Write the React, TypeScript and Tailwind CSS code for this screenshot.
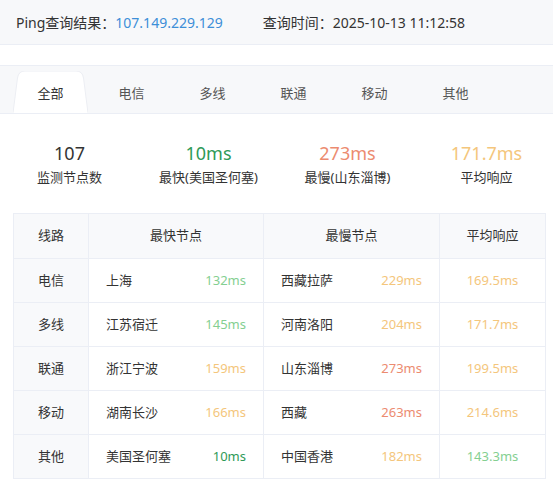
import React from "react";

const font = { fontFamily: '"Noto Sans", "Noto Sans CJK SC", sans-serif' };

type Row = {
  line: string;
  fast: string;
  fastMs: string;
  fastC: string;
  slow: string;
  slowMs: string;
  slowC: string;
  avg: string;
  avgC: string;
};

const G = "text-[#84cf91]";
const Y = "text-[#f4c67c]";
const R = "text-[#ec8b70]";
const DG = "text-[#2f9a57]";

const rows: Row[] = [
  { line: "电信", fast: "上海", fastMs: "132ms", fastC: G, slow: "西藏拉萨", slowMs: "229ms", slowC: Y, avg: "169.5ms", avgC: Y },
  { line: "多线", fast: "江苏宿迁", fastMs: "145ms", fastC: G, slow: "河南洛阳", slowMs: "204ms", slowC: Y, avg: "171.7ms", avgC: Y },
  { line: "联通", fast: "浙江宁波", fastMs: "159ms", fastC: Y, slow: "山东淄博", slowMs: "273ms", slowC: R, avg: "199.5ms", avgC: Y },
  { line: "移动", fast: "湖南长沙", fastMs: "166ms", fastC: Y, slow: "西藏", slowMs: "263ms", slowC: R, avg: "214.6ms", avgC: Y },
  { line: "其他", fast: "美国圣何塞", fastMs: "10ms", fastC: DG, slow: "中国香港", slowMs: "182ms", slowC: Y, avg: "143.3ms", avgC: G },
];

const tabs = ["全部", "电信", "多线", "联通", "移动", "其他"];

function ActiveTabShape() {
  return (
    <svg className="absolute left-[3px] top-[5px]" width="75" height="42" viewBox="0 0 75 42">
      <path d="M0 42 L4.5 7 Q5.5 0 12 0 L63 0 Q69.5 0 70.5 7 L75 42 Z" fill="#ffffff" stroke="#eceef3" strokeWidth="1" />
      <rect x="0.5" y="41" width="74" height="1" fill="#ffffff" />
    </svg>
  );
}

export default function App() {
  return (
    <div className="w-[553px] h-[483px] overflow-hidden bg-white text-[#333333]" style={font}>
      <div className="h-[45px] bg-[#f7f8fa] border-b border-[#ebeef5] flex items-center pl-[16px] text-[14px]">
        <span>Ping查询结果：</span>
        <span className="text-[#3d8fd8]">107.149.229.129</span>
        <span className="ml-[40px]">查询时间：2025-10-13 11:12:58</span>
      </div>
      <div className="h-[20px]" />
      <div className="h-[49px] bg-[#f7f8fa] border-y border-[#ebeef5] flex pl-[10px] relative">
        {tabs.map((t, i) => (
          <div key={t} className="relative w-[81px] h-full flex items-center justify-center text-[13px]">
            {i === 0 && <ActiveTabShape />}
            <span className={"relative pt-[8px] " + (i === 0 ? "text-[#333333]" : "text-[#555555]")}>{t}</span>
          </div>
        ))}
      </div>
      <div className="grid grid-cols-4 w-[556px] pt-[27px] h-[99px]">
        {[
          { v: "107", c: "text-[#333333]", l: "监测节点数" },
          { v: "10ms", c: DG, l: "最快(美国圣何塞)" },
          { v: "273ms", c: R, l: "最慢(山东淄博)" },
          { v: "171.7ms", c: Y, l: "平均响应" },
        ].map((s) => (
          <div key={s.l} className="flex flex-col items-center">
            <div className={"text-[18px] leading-[24px] " + s.c}>{s.v}</div>
            <div className="text-[13px] leading-[18px] mt-[3px]">{s.l}</div>
          </div>
        ))}
      </div>
      <table className="ml-[13px] w-[532px] border-collapse text-[13px] table-fixed">
        <colgroup>
          <col className="w-[75px]" />
          <col className="w-[175px]" />
          <col className="w-[176px]" />
          <col className="w-[106px]" />
        </colgroup>
        <thead>
          <tr className="h-[45px] bg-[#f8f9fb]">
            <th className="border border-[#ebeef5] font-normal">线路</th>
            <th className="border border-[#ebeef5] font-normal">最快节点</th>
            <th className="border border-[#ebeef5] font-normal">最慢节点</th>
            <th className="border border-[#ebeef5] font-normal">平均响应</th>
          </tr>
        </thead>
        <tbody>
          {rows.map((r) => (
            <tr key={r.line} className="h-[44px]">
              <td className="border border-[#ebeef5] bg-[#f8f9fb] text-center">{r.line}</td>
              <td className="border border-[#ebeef5] px-[17px]">
                <div className="flex justify-between">
                  <span>{r.fast}</span>
                  <span className={r.fastC}>{r.fastMs}</span>
                </div>
              </td>
              <td className="border border-[#ebeef5] px-[17px]">
                <div className="flex justify-between">
                  <span>{r.slow}</span>
                  <span className={r.slowC}>{r.slowMs}</span>
                </div>
              </td>
              <td className={"border border-[#ebeef5] text-center " + r.avgC}>{r.avg}</td>
            </tr>
          ))}
        </tbody>
      </table>
    </div>
  );
}
